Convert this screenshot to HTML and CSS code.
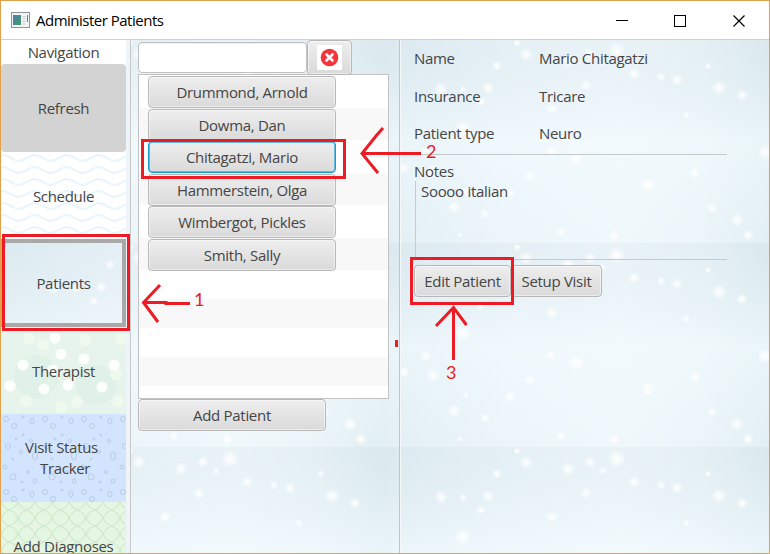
FILE: index.html
```html
<!DOCTYPE html>
<html lang="en">
<head>
<meta charset="utf-8">
<title>Administer Patients</title>
<link rel="stylesheet" href="styles.css">
</head>
<body>
<div class="window">
  <header class="titlebar">
    <svg class="app-icon" width="19" height="16" viewBox="0 0 19 16">
      <defs><linearGradient id="ic" x1="0" y1="0" x2="1" y2="1"><stop offset="0" stop-color="#4f7fb0"/><stop offset="1" stop-color="#3f9a68"/></linearGradient></defs>
      <rect x=".5" y=".5" width="18" height="15" fill="#f4f4f4" stroke="#8e9499"/>
      <rect x="2" y="3" width="8" height="10" fill="url(#ic)"/>
      <path d="M11.500 4.500h3M11.500 7h3M11.500 9.500h3M11.500 12h3" stroke="#c4c8cb"/>
      <path d="M16.500 3v7" stroke="#4c8f78"/>
    </svg>
    <h1 class="title">Administer Patients</h1>
    <svg class="controls" width="132" height="14" viewBox="0 0 132 14" fill="none" stroke="#000" shape-rendering="crispEdges">
      <path d="M0 6.500h12"/><rect x="58.500" y="1.500" width="11" height="11"/>
      <path d="M117.500 1.500l11 11m0-11l-11 11" shape-rendering="auto" stroke-width="1.200"/>
    </svg>
  </header>
  <main class="content">
    <svg class="backdrop" width="768" height="514">
      <defs>
        <linearGradient id="base" x1="0" y1="0" x2="1" y2="0"><stop offset="0" stop-color="#dceaf0"/><stop offset=".3" stop-color="#e9f3f8"/><stop offset=".6" stop-color="#eff7fb"/><stop offset=".82" stop-color="#e8f2f6"/><stop offset="1" stop-color="#d9e9ed"/></linearGradient>
        <linearGradient id="veil" x1="0" y1="0" x2="0" y2="1"><stop offset="0" stop-color="#d9e7ee" stop-opacity=".3"/><stop offset=".5" stop-color="#f4fcff" stop-opacity=".6"/><stop offset="1" stop-color="#f0f9fc" stop-opacity=".35"/></linearGradient>
        <radialGradient id="s"><stop offset="0" stop-color="#fff" stop-opacity=".95"/><stop offset=".4" stop-color="#fff" stop-opacity=".65"/><stop offset="1" stop-color="#fff" stop-opacity="0"/></radialGradient>
        <pattern id="snow" width="387" height="204" patternUnits="userSpaceOnUse" patternTransform="translate(0 -1)">
          <rect width="387" height="204" fill="url(#base)"/>
          <rect width="387" height="204" fill="url(#veil)"/>
          <g fill="url(#s)">
            <circle cx="53" cy="50" r="7"/><circle cx="75" cy="51" r="4"/><circle cx="100" cy="49" r="6"/><circle cx="93" cy="63" r="5"/><circle cx="109" cy="27" r="5"/><circle cx="138" cy="15" r="7"/><circle cx="129" cy="4" r="4"/><circle cx="180" cy="22" r="7"/><circle cx="202" cy="15" r="6"/><circle cx="229" cy="12" r="9"/><circle cx="215" cy="24" r="4"/><circle cx="246" cy="35" r="6"/><circle cx="273" cy="38" r="5"/><circle cx="289" cy="41" r="6"/><circle cx="320" cy="27" r="4"/><circle cx="331" cy="49" r="8"/><circle cx="354" cy="56" r="6"/><circle cx="298" cy="76" r="4"/><circle cx="198" cy="46" r="6"/><circle cx="164" cy="70" r="6"/><circle cx="75" cy="90" r="9"/>
            <circle cx="38" cy="113" r="6"/><circle cx="16" cy="129" r="6"/><circle cx="45" cy="132" r="7"/><circle cx="377" cy="113" r="8"/><circle cx="188" cy="120" r="8"/><circle cx="163" cy="112" r="5"/><circle cx="66" cy="168" r="7"/><circle cx="97" cy="175" r="5"/><circle cx="173" cy="193" r="5"/><circle cx="226" cy="197" r="6"/><circle cx="260" cy="146" r="8"/><circle cx="360" cy="196" r="6"/><circle cx="122" cy="154" r="6"/><circle cx="142" cy="137" r="6"/><circle cx="349" cy="181" r="7"/><circle cx="78" cy="152" r="4"/><circle cx="307" cy="134" r="6"/><circle cx="324" cy="169" r="5"/><circle cx="72" cy="196" r="3"/>
          </g>
        </pattern>
      </defs>
      <rect width="768" height="514" fill="url(#snow)"/>
    </svg>

    <nav class="nav">
      <div class="nav-heading">Navigation</div>
      <div class="tile refresh"><span>Refresh</span></div>
      <div class="tile schedule">
        <svg class="art" width="125" height="88"><defs><pattern id="wave" width="32" height="12" patternUnits="userSpaceOnUse"><path d="M-8 6C-3 6-3 3 2 3S13 9 18 9S29 3 34 3" fill="none" stroke="#e8f6fc" stroke-width="2"/></pattern></defs><rect width="125" height="88" fill="url(#wave)"/></svg>
        <span>Schedule</span></div>
      <div class="tile patients">
        <svg class="art" width="125" height="88"><rect width="387" height="204" fill="url(#snow)"/></svg>
        <span>Patients</span></div>
      <div class="tile therapist">
        <svg class="art" width="125" height="88"><g fill="#d9ede4" opacity=".4"><circle cx="35" cy="50" r="22"/><circle cx="95" cy="58" r="20"/></g><g fill="#f3fbef" opacity=".75"><circle cx="28" cy="12" r="6"/><circle cx="42" cy="18" r="6"/><circle cx="84" cy="13" r="6"/><circle cx="120" cy="12" r="6"/><circle cx="25" cy="74" r="6"/><circle cx="117" cy="74" r="6"/><circle cx="76" cy="75" r="6"/><circle cx="60" cy="80" r="6"/><circle cx="115" cy="47" r="6"/></g><g fill="#fdfffd"><circle cx="54" cy="11" r="5.500"/><circle cx="60" cy="27" r="5.500"/><circle cx="83" cy="32" r="5.500"/><circle cx="22" cy="38" r="5.500"/><circle cx="113" cy="38" r="5.500"/><circle cx="9" cy="59" r="5.500"/><circle cx="43" cy="62" r="5.500"/><circle cx="67" cy="58" r="5.500"/><circle cx="101" cy="60" r="5.500"/><circle cx="52" cy="43" r="5.500"/></g></svg>
        <span>Therapist</span></div>
      <div class="tile visit">
        <svg class="art" width="125" height="88"><defs><pattern id="drops" width="39" height="73" patternUnits="userSpaceOnUse"><g fill="none" stroke="#b8cae4"><circle cx="5" cy="5" r="2.500"/><circle cx="13" cy="12" r="2.500"/><ellipse cx="31" cy="7" rx="2" ry="3"/><circle cx="22" cy="3" r="1"/><circle cx="7" cy="32" r="2.500"/><circle cx="22" cy="21" r="1"/><ellipse cx="34" cy="42" rx="2.500" ry="4"/><circle cx="20" cy="38" r="1.500"/><circle cx="4" cy="53" r="2"/><circle cx="12" cy="63" r="3"/><circle cx="27" cy="58" r="1.500"/><circle cx="34" cy="67" r="2"/><circle cx="30" cy="27" r="1.500"/><circle cx="15" cy="25" r="1"/><circle cx="12" cy="45" r="1"/><circle cx="21" cy="68" r="1"/></g></pattern></defs><rect width="125" height="88" fill="url(#drops)"/></svg>
        <span>Visit Status<br>&nbsp; Tracker</span></div>
      <div class="tile diagnoses">
        <svg class="art" width="125" height="88"><defs><pattern id="net" width="17" height="16" patternUnits="userSpaceOnUse"><path d="M0 0Q3 6 8.500 8T17 16M17 0Q14 6 8.500 8T0 16" fill="none" stroke="#cfeacb" stroke-width="1.200"/></pattern></defs><rect width="125" height="88" fill="url(#net)"/></svg>
        <span>Add Diagnoses</span></div>
    </nav>

    <section class="list-pane">
      <div class="search">
        <input class="field" type="text" aria-label="Search">
        <button class="btn clear" aria-label="Clear"><svg width="25" height="25" viewBox="0 0 25 25"><rect width="25" height="25" fill="#fff"/><circle cx="12.500" cy="12.500" r="8.800" fill="#f5333b"/><path d="M9.500 9.500l6 6m0-6l-6 6" stroke="#fff" stroke-width="2.600" stroke-linecap="round"/></svg></button>
      </div>
      <div class="list">
        <div class="row"><button class="btn">Drummond, Arnold</button></div>
        <div class="row"><button class="btn">Dowma, Dan</button></div>
        <div class="row"><button class="btn focused">Chitagatzi, Mario</button></div>
        <div class="row"><button class="btn">Hammerstein, Olga</button></div>
        <div class="row"><button class="btn">Wimbergot, Pickles</button></div>
        <div class="row"><button class="btn">Smith, Sally</button></div>
        <div class="row empty"></div><div class="row empty"></div><div class="row empty"></div><div class="row empty"></div><div class="row empty"></div>
      </div>
      <button class="btn add">Add Patient</button>
    </section>

    <section class="details">
      <dl class="facts">
        <dt>Name</dt><dd>Mario Chitagatzi</dd>
        <dt>Insurance</dt><dd>Tricare</dd>
        <dt>Patient type</dt><dd>Neuro</dd>
      </dl>
      <div class="notes-block">
        <div class="notes-label">Notes</div>
        <div class="notes">Soooo italian</div>
      </div>
      <div class="actions"><button class="btn edit">Edit Patient</button><button class="btn setup">Setup Visit</button></div>
    </section>
  </main>
</div>
<svg class="callouts" width="770" height="554" viewBox="0 0 770 554">
  <g fill="none" stroke="#ed1c24" stroke-width="3">
    <rect x="3.500" y="235.500" width="125" height="94"/>
    <rect x="142.500" y="140.500" width="202" height="37"/>
    <rect x="411.500" y="258.500" width="101" height="45"/>
    <path d="M190 303.500h-24v-1h-22M160 285l-16.500 17.500L158 322"/>
    <path d="M421 153.500h-59M383 128l-7 8-14 17.500L378 173"/>
    <path d="M453.500 360v-53M436 326l17.500-18.500L466.500 325"/>
  </g>
  <rect x="395" y="340" width="3" height="7" fill="#ed1c24"/>
  <g class="numbers"><text x="194" y="306">1</text><text x="426" y="158">2</text><text x="446" y="379">3</text></g>
</svg>
</body>
</html>
```
FILE: styles.css
```css
* { box-sizing: border-box; }
body { margin: 0; width: 770px; height: 554px; overflow: hidden; position: relative; font: 15px/20px "Open Sans", "Noto Sans", sans-serif; letter-spacing: -.3px; color: #454545; }
.window { width: 770px; height: 554px; border: 1px solid #e3a04c; background: #fff; overflow: hidden; display: flex; flex-direction: column; }
.titlebar { height: 38px; flex: none; display: flex; align-items: center; padding: 0 21px 0 10px; }
.app-icon { flex: none; }
.title { margin: 0 0 0 6px; flex: 1; font-size: 15px; font-weight: 400; color: #000; letter-spacing: -.5px; }
.controls { margin-top: 1px; }
.content { position: relative; isolation: isolate; flex: 1; min-height: 0; display: flex; border-top: 1px solid #c8d2d6; }
.backdrop { position: absolute; inset: 0; z-index: -1; }

.nav { width: 130px; flex: none; border-right: 1px solid #c8c8c8; background: linear-gradient(90deg, #fff 125px, #edf5fa 125px); overflow: hidden; }
.nav-heading { width: 125px; height: 24px; line-height: 25px; text-align: center; }
.tile { width: 125px; height: 87.500px; position: relative; overflow: hidden; display: flex; align-items: center; justify-content: center; text-align: center; line-height: 21px; }
.tile span { position: relative; top: 1px; white-space: nowrap; }
.art { position: absolute; inset: 0; }
.refresh { background: #d3d3d3; border-radius: 4px; }
.patients::before { content: ""; position: absolute; inset: 0; z-index: 1; border: 4px solid #a9a9a9; }
.therapist { background: #e6f4ec; }
.visit { background: #d3e4ff; }
.visit span { left: -2px; top: 0; }
.diagnoses { background: #e5f6e2; }

.btn { font: inherit; letter-spacing: inherit; color: #454545; padding: 0; margin: 0; height: 32px; border: 1px solid #b8b8b8; border-radius: 4px; background: linear-gradient(#eeeeee, #dadada); box-shadow: inset 0 0 0 1px rgba(255,255,255,.5); white-space: nowrap; }
.list-pane { width: 269px; flex: none; padding-left: 7px; border-right: 1px solid #c4c4c4; }
.search { display: flex; align-items: center; height: 34px; }
.field { width: 169px; height: 31px; padding: 4px 8px; border: 1px solid #bfc2c4; border-radius: 4px; background: #fff; box-shadow: inset 0 1px 1px #eee; }
.clear { width: 45px; height: 35px; display: flex; align-items: center; justify-content: center; }
.list { width: 251px; height: 325px; overflow: hidden; border: 1px solid #c3c3c3; background: #fff; }
.row { height: 32.500px; padding: 1px 0 0 9px; background: #fff; }
.row:nth-child(even) { background: #f8f8f8; }
.row .btn { width: 188px; display: block; position: relative; }
.row.empty { height: 29px; }
.focused { border: 1px solid #159ed2; box-shadow: inset 0 0 0 1px #5fbce0; }
.add { width: 188px; display: block; }

.details { flex: 1; border-left: 1px solid #f5f8fa; padding-left: 13px; }
.facts { margin: 0; height: 115px; width: 313px; display: grid; grid-template-columns: 125px 1fr; grid-auto-rows: 37.500px; line-height: 37.500px; border-bottom: 1px solid #c5c9c9; }
.facts dt, .facts dd { margin: 0; }
.notes-block { width: 313px; }
.notes-label { height: 26px; line-height: 33px; }
.notes { height: 79px; margin-left: 1px; padding-left: 5px; line-height: 21px; border-left: 1px solid #c9c9c9; border-bottom: 1px solid #c9c9c9; }
.actions { margin-top: 5px; display: flex; }
.edit { width: 97px; }
.setup { width: 91px; }

.callouts { position: absolute; left: 0; top: 0; pointer-events: none; }
.numbers { font: 18px Lato, sans-serif; fill: #ed1c24; letter-spacing: 0; }
```
